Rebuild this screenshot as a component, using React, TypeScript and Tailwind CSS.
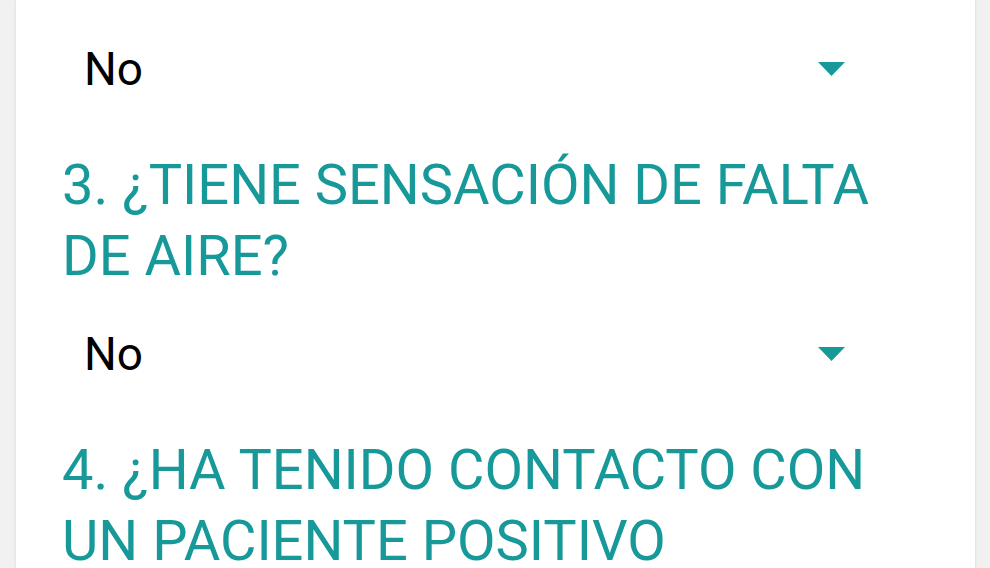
import React from 'react';

const TEAL = '#17999a';

function Caret() {
  return (
    <svg width="27" height="14" viewBox="0 0 27 14" className="block">
      <path d="M0 0 L27 0 L13.5 14 Z" fill={TEAL} />
    </svg>
  );
}

function Select({ value }: { value: string }) {
  return (
    <div className="flex h-[54px] items-center justify-between pl-[22px] pr-[84px]">
      <span className="text-[46px] leading-[54px] text-black">{value}</span>
      <Caret />
    </div>
  );
}

function Question({ label }: { label: string }) {
  return (
    <h2 className="text-[56px] leading-[71px] font-normal text-[#17999a]">{label}</h2>
  );
}

export default function App() {
  return (
    <div
      className="h-[568px] w-[990px] overflow-hidden bg-[#f1f1f1]"
      style={{ fontFamily: 'Roboto, "Noto Sans", sans-serif' }}
    >
      <div className="ml-[16px] h-full w-[959px] bg-white px-[46px] pt-[42px] shadow-[0_0_3px_rgba(0,0,0,0.12)]">
        <Select value="No" />
        <div className="mt-[54px]">
          <Question label="3. ¿TIENE SENSACIÓN DE FALTA DE AIRE?" />
        </div>
        <div className="mt-[35px]">
          <Select value="No" />
        </div>
        <div className="mt-[54px]">
          <Question label="4. ¿HA TENIDO CONTACTO CON UN PACIENTE POSITIVO" />
        </div>
      </div>
    </div>
  );
}
